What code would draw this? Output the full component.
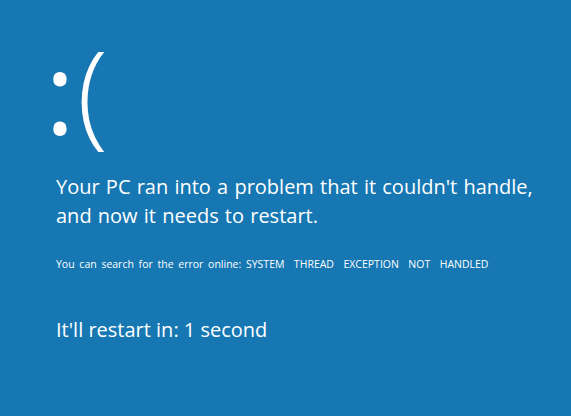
import React from 'react';

const App = () => {
  return (
    <div
      className="w-[571px] h-[416px] bg-[#1677b3] text-white overflow-hidden pl-[56px]"
      style={{ fontFamily: '"Open Sans", "Noto Sans", sans-serif' }}
    >
      <div className="pt-[12px] -ml-[11px] text-[114px] leading-[155px]">
        :<span className="font-light ml-[2px]">(</span>
      </div>
      <div className="mt-[5px] text-[20px] leading-[29px] [word-spacing:1px]">
        Your PC ran into a problem that it couldn't handle,
        <br />
        and now it needs to restart.
      </div>
      <div className="mt-[27px] text-[10.5px] leading-[14px] [word-spacing:2px]">
        You can search for the error online: SYSTEM&nbsp; THREAD&nbsp; EXCEPTION&nbsp; NOT&nbsp; HANDLED
      </div>
      <div className="mt-[44px] text-[20px] leading-[29px]">It'll restart in: 1 second</div>
    </div>
  );
};

export default App;
